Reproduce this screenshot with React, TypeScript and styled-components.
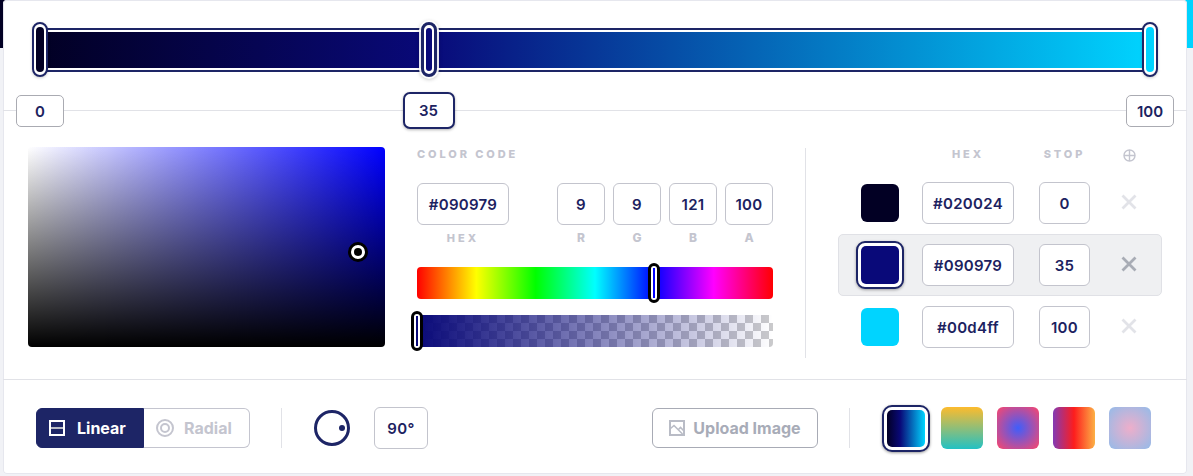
import React from "react";
import styled, { createGlobalStyle } from "styled-components";

const NAVY = "#1d2566";
const TEXT = "#1c2260";
const MUTED = "#c4c5cf";
const LINE = "#e1e2e7";

const GRADIENT = "linear-gradient(90deg, #020024 0%, #090979 35%, #00d4ff 100%)";

const stops = [
    { hex: "#020024", color: "#020024", stop: 0, active: false },
    { hex: "#090979", color: "#090979", stop: 35, active: true },
    { hex: "#00d4ff", color: "#00d4ff", stop: 100, active: false },
];

const presets = [
    { background: GRADIENT, active: true },
    { background: "linear-gradient(0deg, #22c1c3 0%, #fdbb2d 100%)", active: false },
    { background: "radial-gradient(circle, #3f5efb 0%, #fc466b 100%)", active: false },
    { background: "linear-gradient(90deg, #833ab4 0%, #fd1d1d 50%, #fcb045 100%)", active: false },
    { background: "radial-gradient(circle, #eeaeca 0%, #94bbe9 100%)", active: false },
];

const GlobalStyle = createGlobalStyle`
    html, body {
        margin: 0;
        padding: 0;
    }
    body {
        font-family: "Inter", "Liberation Sans", sans-serif;
        color: ${TEXT};
    }
`;

const Page = styled.div`
    box-sizing: border-box;
    width: 1193px;
    height: 476px;
    padding: 0 6px 0 3px;
    overflow: hidden;
    background: ${GRADIENT} top / 100% 48px no-repeat, #f1f2f6;
`;

const Card = styled.div`
    width: 1184px;
    height: 474px;
    border-radius: 4px;
    background: #fff;
    box-shadow: inset 0 0 0 1px #e6e7ee;
`;

const SliderSection = styled.div`
    box-sizing: border-box;
    height: 111px;
    padding: 28px 0 0 37px;
    border-bottom: 1px solid ${LINE};
`;

const Track = styled.div`
    position: relative;
    box-sizing: border-box;
    width: 1110px;
    height: 44px;
    padding: 2px 0;
    border-top: 2px solid ${NAVY};
    border-bottom: 2px solid ${NAVY};
`;

const TrackFill = styled.div`
    height: 36px;
    background: ${GRADIENT};
`;

const StopHandle = styled.div<{ $pos: number; $color: string; $active: boolean }>`
    position: absolute;
    top: -8px;
    left: ${(p) => p.$pos}%;
    box-sizing: border-box;
    width: 16px;
    height: 55px;
    margin-left: -8px;
    border: ${(p) => (p.$active ? 3 : 2)}px solid ${NAVY};
    border-radius: 8px;
    background: #fff;
    box-shadow: ${(p) =>
        p.$active ? "0 0 0 2px rgba(255, 255, 255, 0.9), 0 1px 4px 1px rgba(0, 0, 0, 0.3)" : "0 1px 3px rgba(0, 0, 0, 0.2)"};

    &::after {
        content: "";
        position: absolute;
        inset: 3px 2px;
        border-radius: 5px;
        background: ${(p) => p.$color};
    }
`;

const StopChip = styled.div<{ $pos: number; $active: boolean }>`
    position: absolute;
    top: ${(p) => (p.$active ? 62 : 65)}px;
    left: ${(p) => p.$pos}%;
    box-sizing: border-box;
    display: flex;
    align-items: center;
    justify-content: center;
    width: ${(p) => (p.$active ? 52 : 48)}px;
    height: ${(p) => (p.$active ? 37 : 32)}px;
    transform: translateX(-50%);
    border: ${(p) => (p.$active ? `2px solid ${NAVY}` : "1px solid #aaabb2")};
    border-radius: ${(p) => (p.$active ? 7 : 5)}px;
    background: #fff;
    box-shadow: ${(p) => (p.$active ? "0 1px 3px rgba(0, 0, 0, 0.3)" : "none")};
    font-size: 15px;
    font-weight: 600;
`;

const MainSection = styled.div`
    box-sizing: border-box;
    display: flex;
    height: 269px;
    padding: 36px 0 0 25px;
    border-bottom: 1px solid ${LINE};
`;

const ColorSquare = styled.div`
    position: relative;
    width: 357px;
    height: 200px;
    border-radius: 4px;
    background: linear-gradient(0deg, #000, transparent), linear-gradient(90deg, #fff, #00f);
`;

const SquarePin = styled.div`
    position: absolute;
    left: 320px;
    top: 95px;
    box-sizing: border-box;
    width: 20px;
    height: 20px;
    border: 3px solid #000;
    border-radius: 50%;
    background: #fff;

    &::after {
        content: "";
        position: absolute;
        inset: 3px;
        border-radius: 50%;
        background: #000;
    }
`;

const CodeColumn = styled.div`
    width: 356px;
    margin-left: 32px;
`;

const Caption = styled.div`
    height: 14px;
    font-size: 11px;
    line-height: 14px;
    font-weight: 800;
    letter-spacing: 2.9px;
    color: ${MUTED};
`;

const CodeRow = styled.div`
    display: flex;
    gap: 8px;
    margin-top: 22px;
`;

const CodeCell = styled.div<{ $wide?: boolean }>`
    display: flex;
    flex-direction: column;
    align-items: center;
    gap: 6px;
    width: ${(p) => (p.$wide ? 92 : 48)}px;
    margin-right: ${(p) => (p.$wide ? 40 : 0)}px;
`;

const CellLabel = styled(Caption)<{ $spaced?: boolean }>`
    font-size: ${(p) => (p.$spaced ? 11 : 12)}px;
    letter-spacing: ${(p) => (p.$spaced ? 3 : 0)}px;
`;

const Field = styled.div<{ $w: number }>`
    box-sizing: border-box;
    display: flex;
    align-items: center;
    justify-content: center;
    width: ${(p) => p.$w}px;
    height: 42px;
    border: 1px solid #c3c4cd;
    border-radius: 6px;
    background: #fff;
    font-size: 15px;
    font-weight: 600;
    letter-spacing: 0.3px;
`;

const HueBar = styled.div`
    position: relative;
    height: 32px;
    margin-top: 22px;
    border-radius: 4px;
    background: linear-gradient(90deg, #f00 0%, #ff0 16.66%, #0f0 33.33%, #0ff 50%, #00f 66.66%, #f0f 83.33%, #f00 100%);
`;

const AlphaBar = styled.div`
    position: relative;
    height: 32px;
    margin-top: 16px;
    border-radius: 4px;
    background: linear-gradient(90deg, #090979, rgba(9, 9, 121, 0)),
        conic-gradient(#cacacc 25%, #fff 0 50%, #cacacc 0 75%, #fff 0) 0 0 / 16px 16px;
`;

const BarHandle = styled.div<{ $pos: number; $color: string }>`
    position: absolute;
    top: -4px;
    left: ${(p) => p.$pos}%;
    box-sizing: border-box;
    width: 12px;
    height: 40px;
    margin-left: -6px;
    border: 3px solid #000;
    border-radius: 6px;
    background: #fff;

    &::after {
        content: "";
        position: absolute;
        top: 2px;
        bottom: 2px;
        left: 2px;
        width: 2px;
        background: ${(p) => p.$color};
    }
`;

const VerticalRule = styled.div<{ $h: number }>`
    flex: none;
    width: 1px;
    height: ${(p) => p.$h}px;
    background: ${LINE};
`;

const StopsRule = styled(VerticalRule)`
    margin: 1px 0 0 32px;
`;

const StopsColumn = styled.div`
    width: 324px;
    margin-left: 32px;
`;

const StopsGrid = styled.div`
    display: grid;
    grid-template-columns: 84px 92px 76px 72px;
    align-items: center;
`;

const StopsHead = styled(StopsGrid)`
    height: 25px;
    align-items: start;
`;

const HeadLabel = styled(Caption)<{ $col: number; $w: string }>`
    grid-column: ${(p) => p.$col};
    justify-self: end;
    width: ${(p) => p.$w};
    text-align: center;
    white-space: nowrap;
`;

const StopRow = styled(StopsGrid)<{ $active: boolean }>`
    box-sizing: border-box;
    height: 62px;
    border: 1px solid ${(p) => (p.$active ? "#e0e1e6" : "transparent")};
    border-radius: 5px;
    background: ${(p) => (p.$active ? "#eff0f2" : "transparent")};
    grid-template-columns: 83px 92px 76px 71px;
`;

const Swatch = styled.div<{ $color: string; $active: boolean }>`
    box-sizing: border-box;
    justify-self: center;
    width: ${(p) => (p.$active ? 48 : 38)}px;
    height: ${(p) => (p.$active ? 48 : 38)}px;
    margin-right: 1px;
    padding: ${(p) => (p.$active ? 3 : 0)}px;
    border: ${(p) => (p.$active ? `2px solid ${NAVY}` : "none")};
    border-radius: ${(p) => (p.$active ? 9 : 6)}px;
    background: ${(p) => (p.$active ? "#fff" : p.$color)};
    box-shadow: ${(p) => (p.$active ? "0 1px 3px rgba(0, 0, 0, 0.35)" : "none")};

    &::after {
        content: "";
        display: ${(p) => (p.$active ? "block" : "none")};
        height: 100%;
        border-radius: 5px;
        background: ${(p) => p.$color};
    }
`;

const StopField = styled(Field)`
    justify-self: end;
`;

const RemoveIcon = styled.svg<{ $active: boolean }>`
    justify-self: center;
    margin: 0 0 2px 6px;
    color: ${(p) => (p.$active ? "#a8acb5" : "#e2e3e8")};
`;

const AddIcon = styled.svg`
    justify-self: center;
    margin: 2px 0 0 6px;
    color: ${MUTED};
`;

const Footer = styled.div`
    box-sizing: border-box;
    display: flex;
    align-items: center;
    height: 94px;
    padding: 2px 36px 0 33px;
`;

const ModeToggle = styled.div`
    display: flex;
    height: 40px;
`;

const ModeButton = styled.div<{ $active: boolean }>`
    box-sizing: border-box;
    display: flex;
    align-items: center;
    gap: ${(p) => (p.$active ? 12 : 10)}px;
    width: ${(p) => (p.$active ? 108 : 106)}px;
    padding-left: 12px;
    border: 1px solid ${(p) => (p.$active ? NAVY : MUTED)};
    border-left-width: ${(p) => (p.$active ? 1 : 0)}px;
    border-radius: ${(p) => (p.$active ? "6px 0 0 6px" : "0 6px 6px 0")};
    background: ${(p) => (p.$active ? NAVY : "#fff")};
    color: ${(p) => (p.$active ? "#fff" : MUTED)};
    font-size: 16px;
    font-weight: 700;
`;

const FooterRule = styled(VerticalRule)`
    margin: 0 32px 0 31px;
`;

const AngleDial = styled.svg`
    flex: none;
    margin-right: 24px;
`;

const UploadButton = styled.div`
    box-sizing: border-box;
    display: flex;
    align-items: center;
    justify-content: center;
    gap: 8px;
    width: 166px;
    height: 40px;
    margin-left: auto;
    border: 1px solid #a8abb5;
    border-radius: 6px;
    color: #a8acb8;
    font-size: 16px;
    font-weight: 700;
`;

const PresetRule = styled(VerticalRule)`
    margin: 0 32px 0 31px;
`;

const PresetList = styled.div`
    display: flex;
    align-items: center;
    gap: 14px;
`;

const Preset = styled.div<{ $background: string; $active: boolean }>`
    box-sizing: border-box;
    width: ${(p) => (p.$active ? 48 : 42)}px;
    height: ${(p) => (p.$active ? 47 : 42)}px;
    margin-right: ${(p) => (p.$active ? -3 : 0)}px;
    padding: ${(p) => (p.$active ? 3 : 0)}px;
    border: ${(p) => (p.$active ? `2px solid ${NAVY}` : "none")};
    border-radius: ${(p) => (p.$active ? 10 : 6)}px;
    background: ${(p) => (p.$active ? "#fff" : p.$background)};
    box-shadow: ${(p) => (p.$active ? "0 1px 3px rgba(0, 0, 0, 0.4)" : "none")};

    &::after {
        content: "";
        display: ${(p) => (p.$active ? "block" : "none")};
        height: 100%;
        border-radius: 5px;
        background: ${(p) => p.$background};
    }
`;

function CloseGlyph({ active }: { active: boolean }) {
    return (
        <RemoveIcon $active={active} width="16" height="16" viewBox="0 0 16 16" fill="none">
            <path d="M1.5 1.5L14.5 14.5M14.5 1.5L1.5 14.5" stroke="currentColor" strokeWidth="2.8" />
        </RemoveIcon>
    );
}

function LinearGlyph() {
    return (
        <svg width="16" height="16" viewBox="0 0 16 16" fill="none">
            <rect x="1" y="1" width="14" height="14" stroke="#fff" strokeWidth="2" />
            <rect x="2" y="7" width="12" height="2" fill="#b9bcc6" />
        </svg>
    );
}

function RadialGlyph() {
    return (
        <svg width="18" height="18" viewBox="0 0 18 18" fill="none" stroke="currentColor" strokeWidth="2">
            <circle cx="9" cy="9" r="8" />
            <circle cx="9" cy="9" r="4" />
        </svg>
    );
}

function ImageGlyph() {
    return (
        <svg width="16" height="16" viewBox="0 0 16 16" fill="none" stroke="#b9bcc6">
            <rect x="1" y="1" width="14" height="14" strokeWidth="2" />
            <path d="M1.5 8.5L5 5.5L13.5 14M9.5 9.5L11.5 7.5L14.5 10.5" strokeWidth="1.6" />
        </svg>
    );
}

export default function App() {
    return (
        <Page>
            <GlobalStyle />
            <Card>
                <SliderSection>
                    <Track>
                        <TrackFill />
                        {stops.map((s) => (
                            <React.Fragment key={s.hex}>
                                <StopHandle $pos={s.stop} $color={s.color} $active={s.active} />
                                <StopChip $pos={s.stop} $active={s.active}>
                                    {s.stop}
                                </StopChip>
                            </React.Fragment>
                        ))}
                    </Track>
                </SliderSection>

                <MainSection>
                    <ColorSquare>
                        <SquarePin />
                    </ColorSquare>

                    <CodeColumn>
                        <Caption>COLOR CODE</Caption>
                        <CodeRow>
                            <CodeCell $wide>
                                <Field $w={92}>#090979</Field>
                                <CellLabel $spaced>HEX</CellLabel>
                            </CodeCell>
                            {[
                                ["R", "9"],
                                ["G", "9"],
                                ["B", "121"],
                                ["A", "100"],
                            ].map(([label, value]) => (
                                <CodeCell key={label}>
                                    <Field $w={48}>{value}</Field>
                                    <CellLabel>{label}</CellLabel>
                                </CodeCell>
                            ))}
                        </CodeRow>
                        <HueBar>
                            <BarHandle $pos={66.6} $color="#00f" />
                        </HueBar>
                        <AlphaBar>
                            <BarHandle $pos={0} $color="#090979" />
                        </AlphaBar>
                    </CodeColumn>

                    <StopsRule $h={210} />

                    <StopsColumn>
                        <StopsHead>
                            <HeadLabel $col={2} $w="92px">HEX</HeadLabel>
                            <HeadLabel $col={3} $w="51px">STOP</HeadLabel>
                            <AddIcon width="13" height="13" viewBox="0 0 13 13" fill="none" stroke="currentColor" strokeWidth="1.4">
                                <circle cx="6.5" cy="6.5" r="5.5" />
                                <path d="M6.5 1V12M1 6.5H12" />
                            </AddIcon>
                        </StopsHead>
                        {stops.map((s) => (
                            <StopRow key={s.hex} $active={s.active}>
                                <Swatch $color={s.color} $active={s.active} />
                                <Field $w={92}>{s.hex}</Field>
                                <StopField $w={51}>{s.stop}</StopField>
                                <CloseGlyph active={s.active} />
                            </StopRow>
                        ))}
                    </StopsColumn>
                </MainSection>

                <Footer>
                    <ModeToggle>
                        <ModeButton $active>
                            <LinearGlyph />
                            Linear
                        </ModeButton>
                        <ModeButton $active={false}>
                            <RadialGlyph />
                            Radial
                        </ModeButton>
                    </ModeToggle>
                    <FooterRule $h={40} />
                    <AngleDial width="36" height="36" viewBox="0 0 36 36" fill="none">
                        <circle cx="18" cy="18" r="16.5" stroke={NAVY} strokeWidth="3" />
                        <circle cx="28" cy="18" r="3" fill={NAVY} />
                    </AngleDial>
                    <Field $w={54}>90°</Field>
                    <UploadButton>
                        <ImageGlyph />
                        Upload Image
                    </UploadButton>
                    <PresetRule $h={40} />
                    <PresetList>
                        {presets.map((p) => (
                            <Preset key={p.background} $background={p.background} $active={p.active} />
                        ))}
                    </PresetList>
                </Footer>
            </Card>
        </Page>
    );
}
